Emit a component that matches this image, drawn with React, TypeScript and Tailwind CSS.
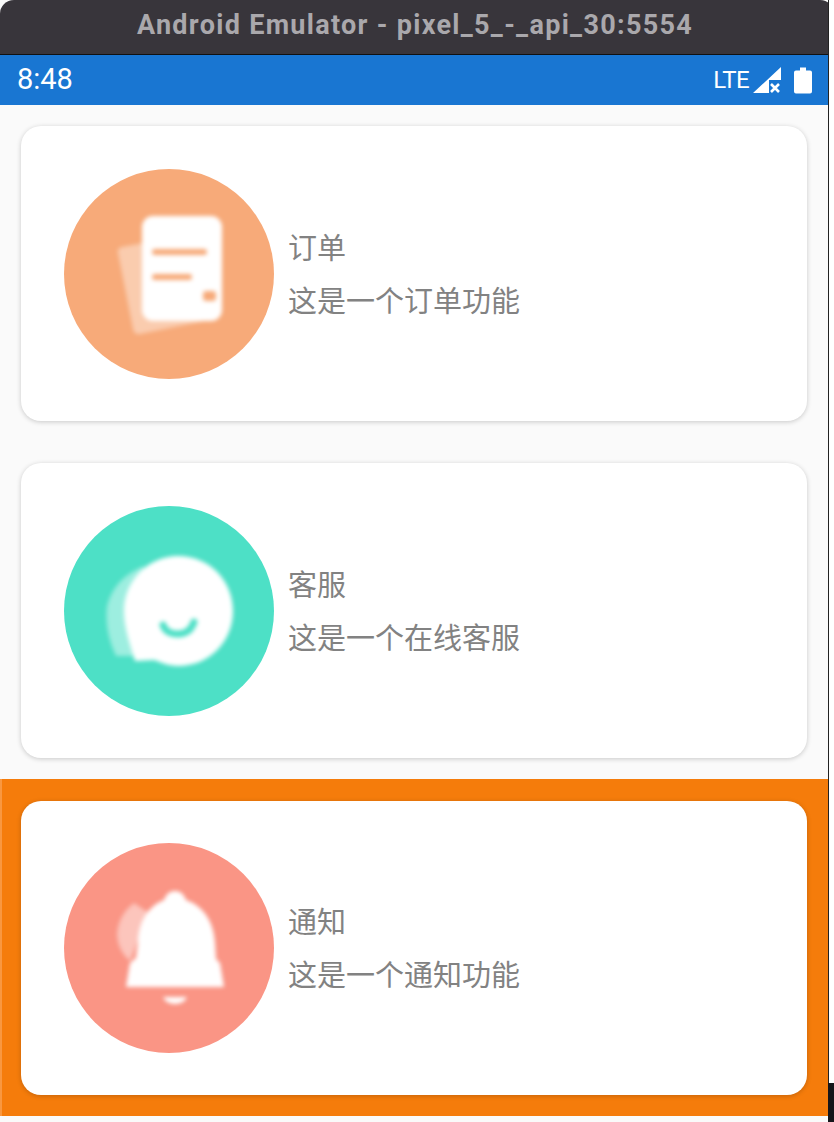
import { ReactNode } from "react";

const cjk = "font-['Noto_Sans_CJK_SC','Noto_Sans',sans-serif]";

// icone document
function OrderIcon() {
  return (
    <svg viewBox="0 0 210 210" className="h-full w-full overflow-visible">
      <circle cx="105" cy="105" r="105" fill="#f7aa79" className="blur-[0.6px]" />
      <g className="blur-[2px]">
        <path d="M54 84 Q53 79 58 78 L90 72 L150 150 L76 165 Q70 166 69 160 Z" fill="#fff" fillOpacity="0.4" />
        <rect x="78" y="47" width="80" height="105" rx="11" fill="#fff" />
        <rect x="88" y="80" width="55" height="6" rx="3" fill="#f7aa79" />
        <rect x="88" y="105" width="40" height="6" rx="3" fill="#f7aa79" />
        <rect x="139" y="122" width="13" height="10" rx="3" fill="#f7aa79" />
      </g>
    </svg>
  );
}

// icone bulle de chat
function ChatIcon() {
  return (
    <svg viewBox="0 0 210 210" className="h-full w-full overflow-visible">
      <circle cx="105" cy="105" r="105" fill="#4de0c6" className="blur-[0.6px]" />
      <g className="blur-[2px]">
        <path d="M80 60 Q50 72 43 100 Q40 125 52 150 L80 150 Z" fill="#fff" fillOpacity="0.45" />
        <path d="M114 50 C146 50 169 75 169 105 C169 135 146 160 114 160 C104 160 96 156 90 154 L71 155 C66 138 60 122 60 105 C60 75 84 50 114 50 Z" fill="#fff" />
        <path d="M99 119 Q102 128 114 128 Q126 128 130 116" fill="none" stroke="#4de0c6" strokeWidth="7" strokeLinecap="round" />
      </g>
    </svg>
  );
}

// icone cloche
function BellIcon() {
  return (
    <svg viewBox="0 0 210 210" className="h-full w-full overflow-visible">
      <circle cx="105" cy="105" r="105" fill="#fa9585" className="blur-[0.6px]" />
      <g className="blur-[2px]">
        <path d="M70 60 Q54 72 53 92 Q54 108 66 118 L85 70 Z" fill="#fff" fillOpacity="0.45" />
        <path d="M111 48 Q119 48 122 57 C142 64 150 82 151 100 L152 116 L156 120 L160 144 L62 144 L66 120 L72 115 L74 100 C74 82 82 64 100 57 Q103 48 111 48 Z" fill="#fff" />
        <path d="M99 154 L123 154 Q120 161 111 161 Q102 161 99 154 Z" fill="#fff" />
      </g>
    </svg>
  );
}

function Row({
  icon,
  title,
  subtitle,
  className,
}: {
  icon: ReactNode;
  title: string;
  subtitle: string;
  className: string;
}) {
  return (
    <div className={className}>
      <div className="flex h-full items-center rounded-[20px] bg-white pl-[43px] shadow-[0_1px_5px_rgba(0,0,0,0.2)]">
        <div className="h-[210px] w-[210px] shrink-0">{icon}</div>
        <div className={`mb-[2px] ml-[14px] text-[29px] leading-[53px] text-[#828282] ${cjk}`}>
          <div>{title}</div>
          <div>{subtitle}</div>
        </div>
      </div>
    </div>
  );
}

export default function App() {
  return (
    <div className="flex h-[1122px] w-[834px] overflow-hidden bg-white">
      <div className="flex w-[828px] shrink-0 flex-col bg-[#fafafa]">
        {/* barre de titre de l'emulateur */}
        <div className="flex h-[54px] w-[834px] shrink-0 items-center justify-center rounded-t-[14px] bg-[#38353b] pb-[3px] pr-[4px] font-['Roboto',sans-serif] text-[27px] font-bold tracking-[1.3px] text-[#aaa8ac]">
          Android Emulator - pixel_5_-_api_30:5554
        </div>
        <div className="h-px w-[829px] shrink-0 bg-[#111]" />
        {/* barre de statut android */}
        <div className="flex h-[50px] shrink-0 items-center justify-between bg-[#1976d2] pl-[17px] pr-[16px] font-['Roboto',sans-serif] text-white">
          <span className="text-[29px]">8:48</span>
          <div className="flex items-center">
            <span className="text-[24px] tracking-[-0.6px]">LTE</span>
            <svg viewBox="0 0 28 26" className="ml-[4px] h-[26px] w-[28px]">
              <path d="M0 26 L28 0 V13 H16 V26 Z" fill="#fff" />
              <path d="M18 17 L26 25 M26 17 L18 25" stroke="#fff" strokeWidth="2.6" />
            </svg>
            <svg viewBox="0 0 18 26" className="ml-[13px] h-[27px] w-[18px]">
              <path d="M6 0 H12 V3 H16 Q18 3 18 5 V24 Q18 26 16 26 H2 Q0 26 0 24 V5 Q0 3 2 3 H6 Z" fill="#fff" />
            </svg>
          </div>
        </div>
        <Row className="h-[337px] shrink-0 p-[21px]" icon={<OrderIcon />} title="订单" subtitle="这是一个订单功能" />
        <Row className="h-[337px] shrink-0 p-[21px]" icon={<ChatIcon />} title="客服" subtitle="这是一个在线客服" />
        <Row
          className="h-[337px] shrink-0 border-l-2 border-[#f9973f] bg-[#f57c0b] pb-[21px] pl-[19px] pr-[21px] pt-[22px]"
          icon={<BellIcon />}
          title="通知"
          subtitle="这是一个通知功能"
        />
      </div>
      {/* bord noir et fond derriere la fenetre */}
      <div className="flex w-[6px] shrink-0 flex-col">
        <div className="h-[1083px] border-l border-[#222] bg-white" />
        <div className="flex-1 bg-[#15151a]" />
      </div>
    </div>
  );
}
